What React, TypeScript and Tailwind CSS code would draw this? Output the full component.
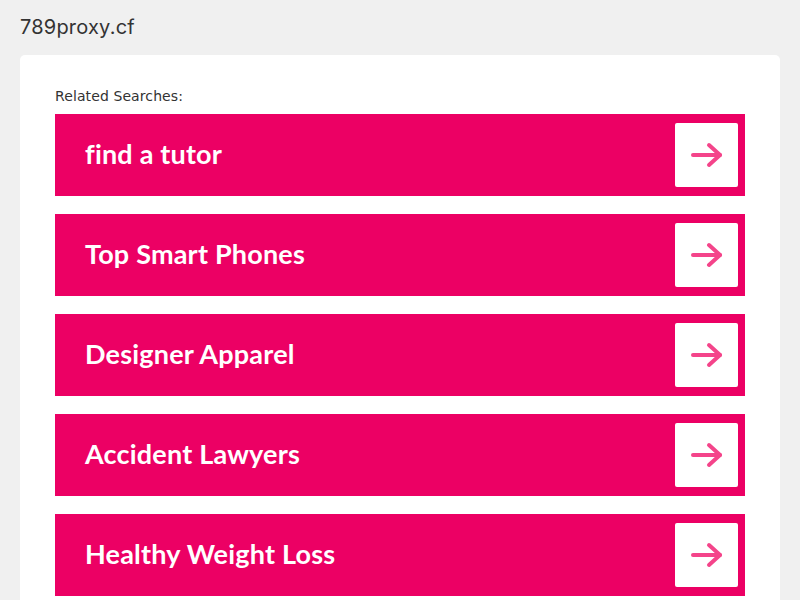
import React from "react";

const items = ["find a tutor", "Top Smart Phones", "Designer Apparel", "Accident Lawyers", "Healthy Weight Loss"];

function Arrow() {
  return (
    <svg width="34" height="26" viewBox="0 0 34 26" fill="none" stroke="#f4448a" strokeWidth="4" strokeLinecap="round" strokeLinejoin="round">
      <path d="M3 13 H30" />
      <path d="M19 3 L30 13 L19 23" />
    </svg>
  );
}

export default function App() {
  return (
    <div className="min-h-[600px] bg-[#f0f0f0] px-5 pt-[13px]" style={{ fontFamily: "Inter, 'Open Sans', sans-serif" }}>
      <div className="h-[29px] text-[20px] leading-[29px] text-[#333] tracking-[0.2px]">789proxy.cf</div>
      <div className="mt-[13px] rounded-[5px] bg-white px-[35px] pt-[32px] pb-[40px]">
        <div className="text-[14px] leading-[19px] tracking-[0.1px] text-[#333]" style={{ fontFamily: "'DejaVu Sans', sans-serif" }}>Related Searches:</div>
        <div className="mt-[8px] flex flex-col gap-[18px]">
          {items.map((t) => (
            <div key={t} className="flex h-[82px] items-center justify-between bg-[#ec0064] pl-[30px] pr-[7px]">
              <span className="-mt-[2px] text-[27px] font-bold tracking-[0.2px] text-white" style={{ fontFamily: "Lato, sans-serif" }}>{t}</span>
              <div className="flex h-[64px] w-[63px] items-center justify-center rounded-[2px] bg-white">
                <Arrow />
              </div>
            </div>
          ))}
        </div>
      </div>
    </div>
  );
}
